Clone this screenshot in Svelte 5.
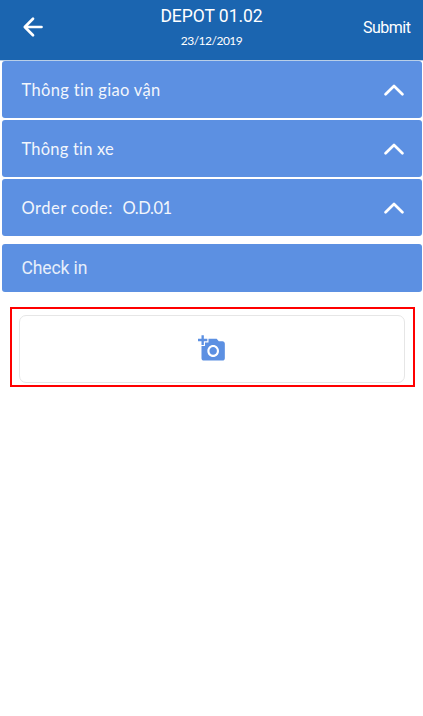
<script>
  const sections = [
    { label: 'Thông tin giao vận', spacing: 0.33 },
    { label: 'Thông tin xe', spacing: 0.2 },
    { label: 'Order code:  ', spacing: 0.52, code: 'O.D.01' }
  ];
</script>

<div class="screen">
  <header>
    <button class="back" aria-label="Back">
      <svg width="22" height="22" viewBox="0 0 22 22">
        <path d="M19.5 11H3M11 2.8L2.8 11L11 19.2" />
      </svg>
    </button>
    <div class="heading">
      <h1>DEPOT 01.02</h1>
      <p>23/12/2019</p>
    </div>
    <button class="submit">Submit</button>
  </header>

  <main>
    {#each sections as section}
      <div class="bar">
        <span class="label" style="letter-spacing: {section.spacing}px">{section.label}{#if section.code}<span class="code">{section.code}</span>{/if}</span>
        <svg class="chevron" width="20" height="12" viewBox="0 0 20 12">
          <path d="M1.6 10.2L10 2L18.4 10.2" />
        </svg>
      </div>
    {/each}
    <div class="bar check"><span>Check in</span></div>

    <div class="highlight">
      <button class="photo" aria-label="Add photo">
        <svg width="28" height="29" viewBox="0 0 24 24" preserveAspectRatio="none">
          <path d="M3 4V1h2v3h3v2H5v3H3V6H0V4h3zm3 6V7h3V4h7l1.83 2H21c1.1 0 2 .9 2 2v12c0 1.1-.9 2-2 2H5c-1.1 0-2-.9-2-2V10h3zm7 9c2.76 0 5-2.24 5-5s-2.24-5-5-5-5 2.24-5 5 2.24 5 5 5zm-3.2-5c0 1.77 1.43 3.2 3.2 3.2s3.2-1.43 3.2-3.2-1.43-3.2-3.2-3.2-3.2 1.43-3.2 3.2z" />
        </svg>
      </button>
    </div>
  </main>
</div>

<style>
  .screen {
    box-sizing: border-box;
    width: 423px;
    height: 716px;
    background: #fff;
    color: #fff;
    font-family: Roboto, "Liberation Sans", sans-serif;
    overflow: hidden;
  }
  button {
    border: 0;
    padding: 0;
    margin: 0;
    background: none;
    color: inherit;
    font: inherit;
  }
  header {
    display: grid;
    grid-template-columns: 100px 1fr 100px;
    height: 60px;
    background: #1b65b0;
    border-bottom: 1px solid #b9cfe8;
  }
  .back {
    display: flex;
    padding: 16px 0 0 22px;
  }
  .back path,
  .chevron path {
    fill: none;
    stroke: #fff;
    stroke-width: 2.7;
    stroke-linecap: round;
    stroke-linejoin: round;
  }
  .heading {
    text-align: center;
    padding-top: 6px;
  }
  h1 {
    margin: 0;
    font-size: 17.5px;
    line-height: 21px;
    letter-spacing: -0.05px;
    font-weight: 400;
    white-space: nowrap;
  }
  p {
    margin: 5px 0 0;
    font: 12px/18px Lato, sans-serif;
    letter-spacing: -0.5px;
  }
  .submit {
    font-size: 16px;
    line-height: 20px;
    letter-spacing: -0.5px;
    text-align: right;
    padding: 18px 12.5px 0 0;
    align-self: start;
  }
  main {
    display: flex;
    flex-direction: column;
    gap: 2px;
  }
  .bar {
    box-sizing: border-box;
    display: flex;
    align-items: center;
    justify-content: space-between;
    height: 57px;
    margin: 0 1px 0 2px;
    padding: 0 18.5px 0 19.5px;
    border-radius: 3px;
    background: #5c90e2;
  }
  .label {
    font: 16.5px/24px Lato, sans-serif;
    white-space: pre;
    opacity: 0.92;
  }
  .code {
    letter-spacing: -0.45px;
  }
  .check {
    height: 48px;
    margin-top: 6px;
    font-size: 17.6px;
    letter-spacing: -0.15px;
  }
  .check span {
    opacity: 0.85;
  }
  .highlight {
    box-sizing: border-box;
    display: flex;
    width: 405px;
    height: 80px;
    margin: 13px 0 0 10px;
    padding: 6px 8px 2px 7px;
    border: 2px solid #f00;
  }
  .photo {
    box-sizing: border-box;
    display: flex;
    justify-content: center;
    flex: 1;
    height: 68px;
    padding-top: 18px;
    border: 1px solid #e6e6e6;
    border-radius: 7px;
  }
  .photo path {
    fill: #5c90e2;
  }
</style>
